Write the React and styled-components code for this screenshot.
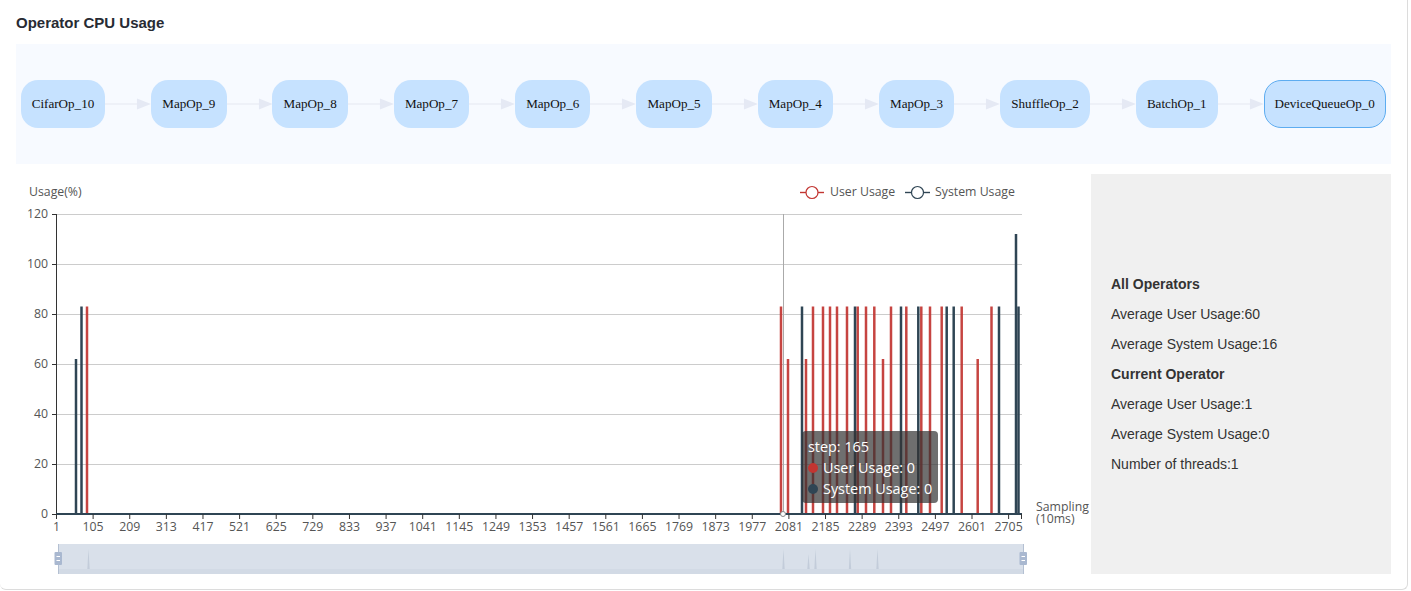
import React from 'react';
import styled, { createGlobalStyle } from 'styled-components';

const Global = createGlobalStyle`
  html, body { margin: 0; padding: 0; background: #fff; }
  body { font-family: "Liberation Sans", Arial, sans-serif; color: #282b33; }
`;

const Card = styled.main`
  box-sizing: border-box;
  width: 1408px;
  height: 590px;
  padding: 0 16px;
  background: #fff;
  border-right: 1px solid #dcdcdc;
  border-bottom: 1px solid #dcdcdc;
  border-radius: 0 0 6px 6px;
`;

const Title = styled.h1`
  margin: 0;
  height: 44px;
  line-height: 46px;
  font-size: 15px;
  font-weight: 700;
  color: #282b33;
`;

const Dag = styled.section`
  display: flex;
  align-items: center;
  box-sizing: border-box;
  width: 1375px;
  height: 120px;
  padding-left: 4.7px;
  background: #f7faff;
`;

const Node = styled.div`
  flex: none;
  box-sizing: border-box;
  width: ${p => p.$w}px;
  height: 48px;
  display: flex;
  align-items: center;
  justify-content: center;
  border-radius: 17px;
  background: #c6e2ff;
  border: ${p => (p.$active ? '1.5px solid #5dacf0' : 'none')};
  font-family: "Liberation Serif", "Times New Roman", serif;
  font-size: 13.1px;
  color: #111;
  white-space: nowrap;
`;

const EdgeSvg = styled.svg`
  flex: none;
  width: 45.9px;
  height: 12px;
  display: block;
`;

const Edge = () => (
  <EdgeSvg viewBox="0 0 46 12">
    <rect x="0" y="5" width="36" height="2" fill="#eef1f8" />
    <polygon points="32,0.5 46,6 32,11.5" fill="#e5e9f4" />
  </EdgeSvg>
);

const Lower = styled.section`
  display: flex;
  margin-top: 10px;
  height: 400px;
`;

const ChartWrap = styled.div`
  position: relative;
  flex: none;
  width: 1075px;
  height: 400px;
`;

const ChartSvg = styled.svg`
  display: block;
  width: 1075px;
  height: 400px;
  font-family: "Open Sans", "Noto Sans", sans-serif;
  font-size: 12.3px;
  fill: #555;
`;

const Tooltip = styled.div`
  position: absolute;
  left: 786px;
  top: 257px;
  box-sizing: border-box;
  width: 136px;
  height: 72px;
  padding: 5px 6px;
  border-radius: 4px;
  background: rgba(50, 50, 50, 0.7);
  color: #fff;
  font-family: "Open Sans", "Noto Sans", sans-serif;
  font-size: 14.4px;
  line-height: 21px;
  white-space: nowrap;
`;

const TipDot = styled.span`
  display: inline-block;
  width: 10px;
  height: 10px;
  margin-right: 5px;
  border-radius: 50%;
  background: ${p => p.$c};
`;

const Info = styled.aside`
  flex: none;
  box-sizing: border-box;
  width: 300px;
  height: 400px;
  padding-left: 20px;
  display: flex;
  flex-direction: column;
  justify-content: center;
  background: #f0f0f0;
`;

const InfoLine = styled.div`
  height: 30px;
  line-height: 30px;
  font-size: 14px;
  font-weight: ${p => (p.$bold ? 700 : 400)};
  color: #333;
`;

const nodes = [
  ['CifarOp_10', 84.6],
  ['MapOp_9', 75.4],
  ['MapOp_8', 75.4],
  ['MapOp_7', 75.4],
  ['MapOp_6', 75.4],
  ['MapOp_5', 75.4],
  ['MapOp_4', 75.4],
  ['MapOp_3', 75.4],
  ['ShuffleOp_2', 89.7],
  ['BatchOp_1', 82],
  ['DeviceQueueOp_0', 122.2],
];

const RED = '#c23531';
const DARK = '#2f4554';
const yOf = v => 514 - v * 2.5;

const redSpikes = [
  [87, 83], [781, 83], [788, 62], [806, 62], [813, 83], [823, 83], [830, 83], [837, 83],
  [847, 83], [857.7, 83], [866, 83], [874.3, 83], [883, 62], [891, 83], [906.3, 83],
  [921.3, 83], [930, 83], [941.7, 83], [961.7, 83], [977.7, 62], [991.5, 83],
];
const darkSpikes = [
  [76, 62], [81.5, 83], [802, 83], [855, 83], [901, 83], [918.3, 83], [946.7, 83],
  [953.7, 83], [999, 83], [1016, 112], [1018.5, 83],
];

const ticks = Array.from({ length: 27 }, (_, i) => ({
  x: 56.5 + i * 36.62,
  label: 1 + i * 104,
}));

const miniSpikes = [
  [88.5, 549], [783.5, 549], [808.5, 554], [815.5, 549], [850, 549], [877.5, 549],
];

const Handle = ({ x }) => (
  <g>
    <rect x={x} y="552" width="7.5" height="13" rx="1" fill="#a9b8d0" />
    <rect x={x + 2} y="556" width="3.5" height="1" fill="#fff" />
    <rect x={x + 2} y="560" width="3.5" height="1" fill="#fff" />
  </g>
);

const Chart = () => (
  <ChartSvg viewBox="16 174 1075 400">
    <text x="29" y="196">Usage(%)</text>

    <line x1="800" x2="824" y1="192.5" y2="192.5" stroke={RED} strokeWidth="1.4" />
    <circle cx="812" cy="192.5" r="6" fill="#fff" stroke={RED} strokeWidth="1.2" />
    <text x="830" y="196">User Usage</text>
    <line x1="905" x2="930" y1="192.5" y2="192.5" stroke={DARK} strokeWidth="1.4" />
    <circle cx="917.5" cy="192.5" r="6" fill="#fff" stroke={DARK} strokeWidth="1.2" />
    <text x="935" y="196">System Usage</text>

    {[120, 100, 80, 60, 40, 20].map(v => (
      <line key={v} x1="57" x2="1022" y1={yOf(v) + 0.5} y2={yOf(v) + 0.5} stroke="#ccc" />
    ))}
    {[120, 100, 80, 60, 40, 20, 0].map(v => (
      <g key={v}>
        <line x1="52" x2="57" y1={yOf(v) + 0.5} y2={yOf(v) + 0.5} stroke="#333" />
        <text x="48" y={yOf(v) + 4} textAnchor="end">{v}</text>
      </g>
    ))}

    <line x1="783.5" x2="783.5" y1="214" y2="514" stroke="#aaa" />

    {redSpikes.map(([x, v]) => (
      <line key={x} x1={x} x2={x} y1={yOf(v)} y2="514" stroke={RED} strokeWidth="2.5" opacity="0.92" />
    ))}
    {darkSpikes.map(([x, v]) => (
      <line key={x} x1={x} x2={x} y1={yOf(v)} y2="514" stroke={DARK} strokeWidth="2.5" />
    ))}

    <line x1="56.5" x2="56.5" y1="214" y2="519" stroke="#333" />
    <rect x="56" y="513" width="966" height="2" fill={DARK} />
    <circle cx="783" cy="514" r="2.5" fill="#fff" stroke="#888" />

    {ticks.map(t => (
      <g key={t.label}>
        <line x1={t.x} x2={t.x} y1="514" y2="519" stroke="#333" />
        <text x={t.x} y="531" textAnchor="middle">{t.label}</text>
      </g>
    ))}
    <line x1="1021.5" x2="1021.5" y1="514" y2="519" stroke="#333" />

    <text x="1036" y="511">Sampling</text>
    <text x="1036" y="523">(10ms)</text>

    <rect x="58" y="544" width="966" height="30" fill="#d9e0ea" />
    <rect x="58" y="569" width="966" height="5" fill="#d2dae5" />
    <line x1="58.5" x2="58.5" y1="544" y2="574" stroke="#b4c0d2" />
    <line x1="1023.5" x2="1023.5" y1="544" y2="574" stroke="#b4c0d2" />
    {miniSpikes.map(([x, top]) => (
      <polygon key={x} points={`${x - 1.2},569 ${x},${top} ${x + 1.2},569`} fill="#c3ccda" />
    ))}
    <Handle x={54.5} />
    <Handle x={1019.5} />
  </ChartSvg>
);

export default function App() {
  return (
    <>
      <Global />
      <Card>
        <Title>Operator CPU Usage</Title>
        <Dag>
          {nodes.map(([name, w], i) => (
            <React.Fragment key={name}>
              {i > 0 && <Edge />}
              <Node $w={w} $active={i === nodes.length - 1}>{name}</Node>
            </React.Fragment>
          ))}
        </Dag>
        <Lower>
          <ChartWrap>
            <Chart />
            <Tooltip>
              <div>step: 165</div>
              <div><TipDot $c={RED} />User Usage: 0</div>
              <div><TipDot $c={DARK} />System Usage: 0</div>
            </Tooltip>
          </ChartWrap>
          <Info>
            <InfoLine $bold>All Operators</InfoLine>
            <InfoLine>Average User Usage:60</InfoLine>
            <InfoLine>Average System Usage:16</InfoLine>
            <InfoLine $bold>Current Operator</InfoLine>
            <InfoLine>Average User Usage:1</InfoLine>
            <InfoLine>Average System Usage:0</InfoLine>
            <InfoLine>Number of threads:1</InfoLine>
          </Info>
        </Lower>
      </Card>
    </>
  );
}
